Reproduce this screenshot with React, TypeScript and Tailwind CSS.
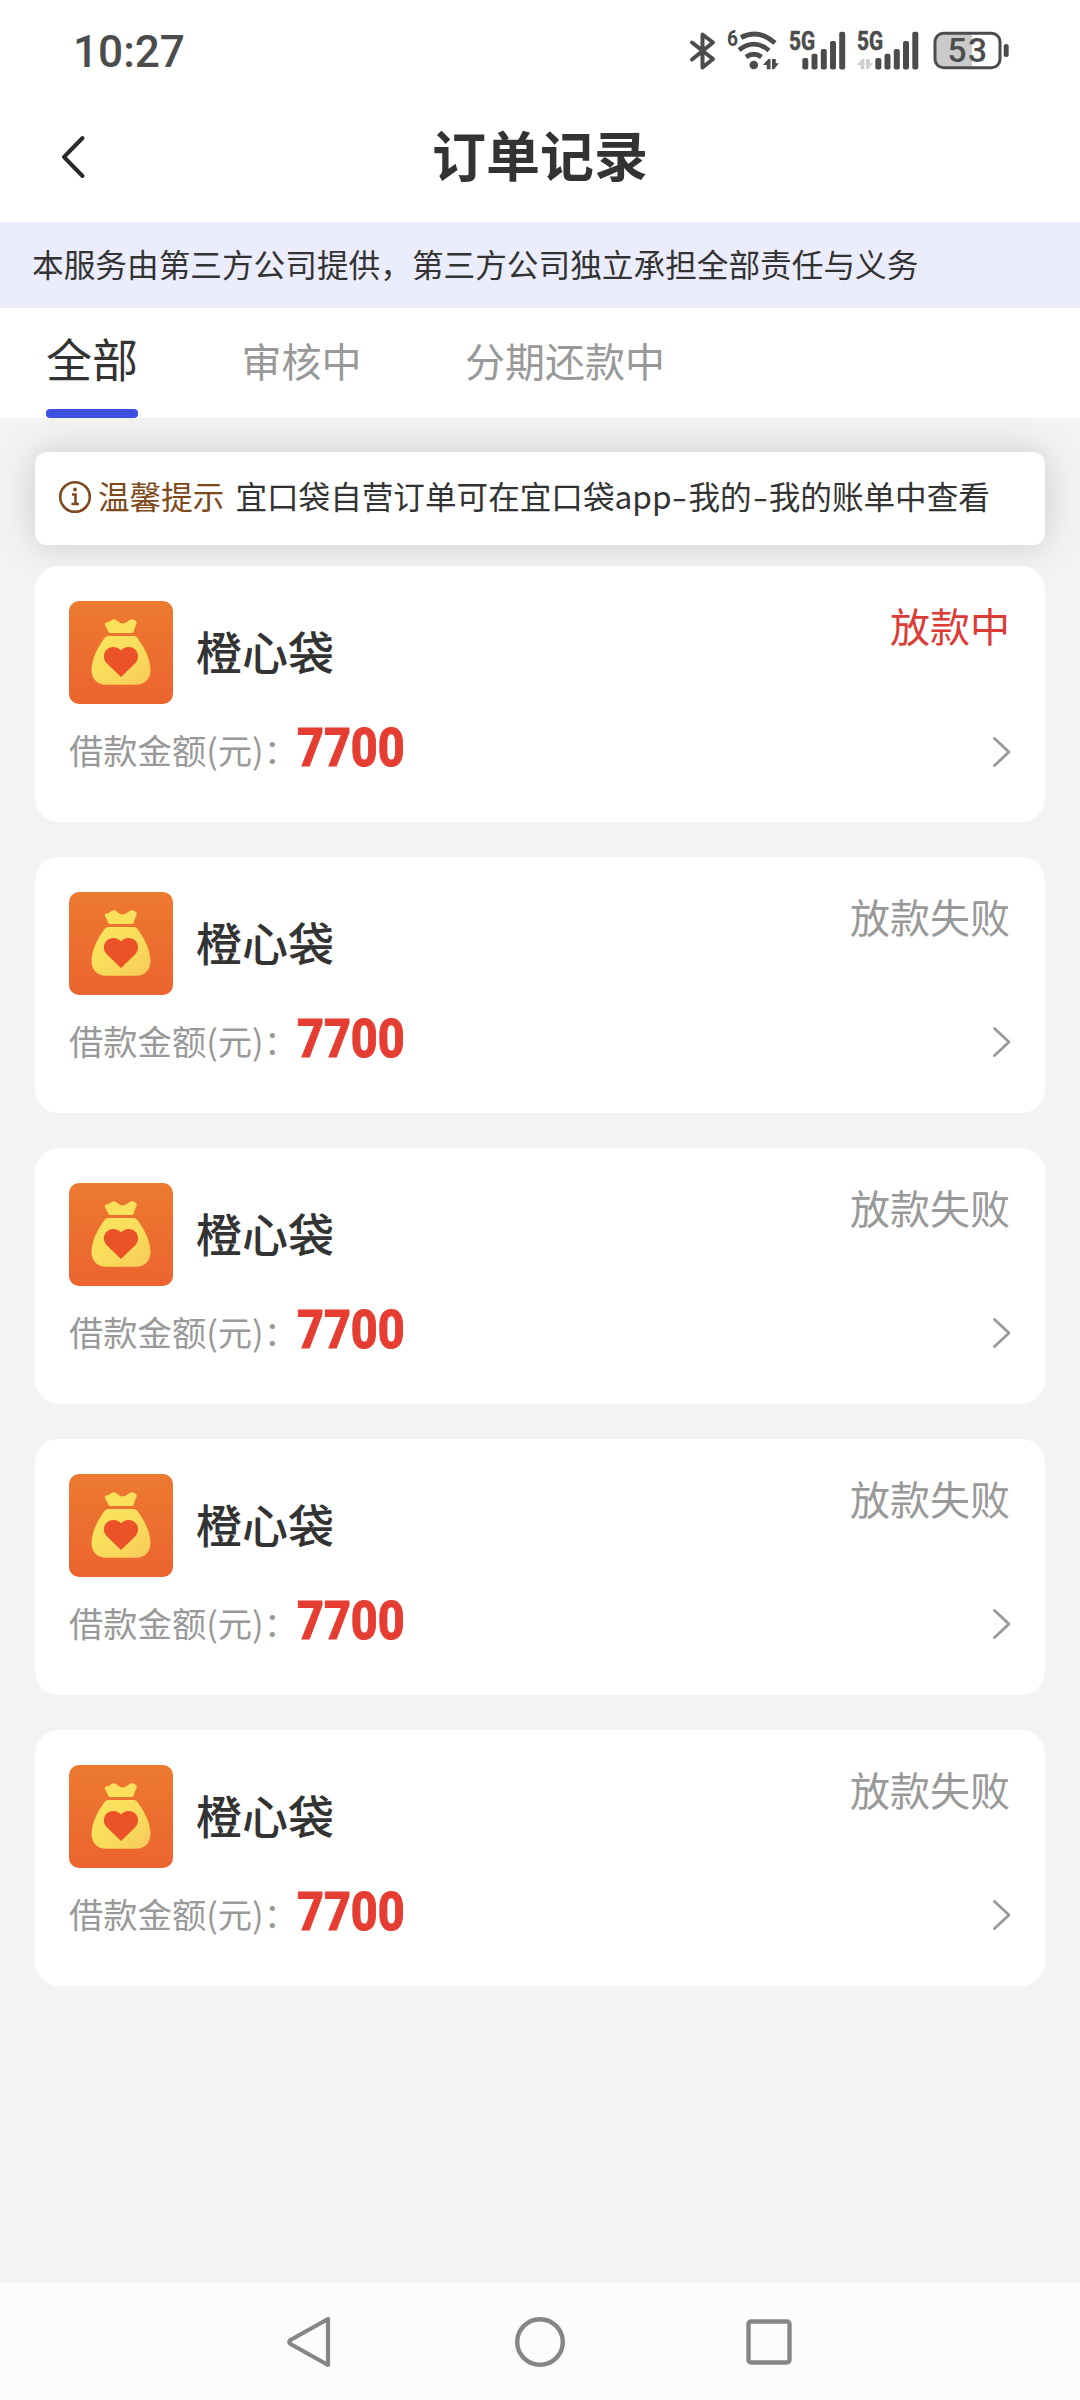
const orders = [
  { status: '放款中', active: true },
  { status: '放款失败', active: false },
  { status: '放款失败', active: false },
  { status: '放款失败', active: false },
  { status: '放款失败', active: false },
];

function StatusIcons() {
  return (
    <svg className="block" width="380" height="80" viewBox="0 0 380 80" fill="none" stroke="#4c4c4c">
      {/* bluetooth */}
      <path d="M32 32.5 L53 49 L42.5 57.5 V24.5 L53 32.5 L32 49.5" strokeWidth="4" strokeLinejoin="round" strokeLinecap="round" />
      {/* wifi */}
      <g strokeWidth="4.8">
        <path d="M81 27.5 Q99 18.5 115 33" />
        <path d="M79 40 Q94.5 28 109 40.5" />
        <path d="M86 47 Q94 41.5 101.500 47" />
      </g>
      <circle cx="93.800" cy="55" r="4.300" fill="#4c4c4c" stroke="none" />
      <path d="M103 55 L108.300 49 H110.500 V59.300 H106.800 V55 Z M112 49 V59.300 H114 L119 53.300 H115.800 V49 Z" fill="#4c4c4c" stroke="none" />
      <path d="M197 55 L202.300 49 H204.500 V59.300 H200.800 V55 Z M206 49 V59.300 H208 L213 53.300 H209.800 V49 Z" fill="#cfcfcf" stroke="none" />
      {/* signal bars */}
      <g fill="#4c4c4c" stroke="none">
        <rect x="142.300" y="48" width="6" height="11.500" rx="2" />
        <rect x="151.500" y="43.700" width="6" height="15.800" rx="2" />
        <rect x="160.800" y="39" width="6" height="20.500" rx="2" />
        <rect x="170" y="31" width="6" height="28.500" rx="2" />
        <rect x="179.200" y="21.700" width="6" height="37.800" rx="2" />
        <rect x="215.300" y="48" width="6" height="11.500" rx="2" />
        <rect x="224.500" y="43.700" width="6" height="15.800" rx="2" />
        <rect x="233.800" y="39" width="6" height="20.500" rx="2" />
        <rect x="243" y="31" width="6" height="28.500" rx="2" />
        <rect x="252.300" y="21.700" width="6" height="37.800" rx="2" />
      </g>
      {/* battery */}
      <path d="M283 23.300 H312 V57.700 H283 Q275 57.700 275 49.700 V31.300 Q275 23.300 283 23.300Z" fill="#cacaca" stroke="none" />
      <rect x="275" y="23.300" width="65" height="34.400" rx="8.500" strokeWidth="3" />
      <rect x="343.700" y="34" width="5" height="13" rx="2.500" fill="#4c4c4c" stroke="none" />
      <g fill="#4c4c4c" stroke="none" fontFamily="Roboto, sans-serif">
        <text x="67" y="36" fontSize="22" fontWeight="700" textLength="11" lengthAdjust="spacingAndGlyphs">6</text>
        <text x="129" y="40" fontSize="25" fontWeight="700" textLength="26" lengthAdjust="spacingAndGlyphs" stroke="#4c4c4c" strokeWidth="0.6">5G</text>
        <text x="197" y="40" fontSize="25" fontWeight="700" textLength="26" lengthAdjust="spacingAndGlyphs" stroke="#4c4c4c" strokeWidth="0.6">5G</text>
        <text x="287.500" y="52" fontSize="33.500" fontWeight="500" textLength="39.500" lengthAdjust="spacing">53</text>
      </g>
    </svg>
  );
}

function BagLogo() {
  return (
    <svg className="block h-[103px] w-[104px] rounded-[10px]" viewBox="0 0 104 103">
      <defs>
        <linearGradient id="bg" x1="0" y1="0" x2="0" y2="1">
          <stop offset="0" stopColor="#ec7a2f" />
          <stop offset="1" stopColor="#ec642f" />
        </linearGradient>
        <linearGradient id="bag" x1="0" y1="0" x2="1" y2="1">
          <stop offset="0" stopColor="#fbe55e" />
          <stop offset="0.6" stopColor="#f8da5a" />
          <stop offset="1" stopColor="#f8c85c" />
        </linearGradient>
      </defs>
      <rect width="104" height="103" fill="url(#bg)" />
      <path d="M39.500 31 L36 24 Q35 22 37.500 21.500 Q40.500 21.300 42.500 19.100 Q45.500 17 49 20.500 Q52.500 23.300 56 22 Q59 20 61.500 18.500 Q64.500 17.300 67 20 Q68.500 22 66.500 25 L64.500 31 Q64 32 62.500 32 H41.500 Q40 32 39.500 31Z" fill="#fbe05c" />
      <path d="M39.500 35 H64.500 Q67 35 68.500 37 C76 47.500 81 57.500 81.500 68.500 C81.500 78.500 75.500 83.700 67 83.700 H37 C28.500 83.700 22.500 78.500 22.500 68.500 C23 57.500 28 47.500 35.500 37 Q37 35 39.500 35Z" fill="url(#bag)" />
      <path d="M52 76 L37.500 62 C33 57 34.500 49.500 40.500 46.800 C45 45 49.500 46.500 52 49.500 C54.500 46.500 59 45 63.500 46.800 C69.500 49.500 71 57 66.500 62 Z" fill="#ec5228" />
    </svg>
  );
}

function OrderCard({ status, active }: { status: string; active: boolean }) {
  return (
    <div className="flex h-[256px] flex-col rounded-[24px] bg-white pt-[35px] pr-[34px] pl-[34px]">
      <div className="flex h-[103px]">
        <BagLogo />
        <div className="ml-[23px] flex-1 text-[46px] leading-[98px] font-medium text-[#333]">橙心袋</div>
        <div className={active ? 'mt-[4px] mr-px text-[40px] leading-[41px] text-[#dc3c36]' : 'mt-[4px] mr-px text-[40px] leading-[41px] text-[#999]'}>{status}</div>
      </div>
      <div className="mt-[15px] flex h-[60px] items-center">
        <div className="w-[228px] text-[34.300px] leading-[60px] whitespace-nowrap text-[#999]">借款金额(元)：</div>
        <div className="flex-1">
          <div className="-mt-[2px] w-[130px] origin-left scale-x-[0.865] font-[Roboto,sans-serif] text-[54px] leading-[54px] font-extrabold text-[#e63d33] [-webkit-text-stroke:1px_#e63d33]">7700</div>
        </div>
        <svg className="mt-[5px] block" width="19" height="32" viewBox="0 0 19 32" fill="none" stroke="#999" strokeWidth="2.800" strokeLinecap="round" strokeLinejoin="round">
          <path d="M2.500 2.500 L17 16 L2.500 29.500" />
        </svg>
      </div>
    </div>
  );
}

function Dash() {
  return <span className="inline-block w-[17px] scale-x-[1.400] text-center">-</span>;
}

export default function App() {
  return (
    <div className="flex h-[2400px] w-[1080px] flex-col overflow-hidden bg-[#f3f3f3] font-['Noto_Sans_CJK_SC',sans-serif]">
      <div className="flex h-[100px] justify-between bg-white pt-[10px] pr-[40px] pl-[73px]">
        <div className="mt-[16px] origin-left scale-x-[0.98] font-[Roboto,sans-serif] text-[45px] leading-[52px] font-medium text-[#4c4c4c]">10:27</div>
        <StatusIcons />
      </div>

      <header className="flex h-[122px] items-center bg-white pb-[8px]">
        <svg className="ml-[58px] block" width="30" height="48" viewBox="0 0 30 48" fill="none" stroke="#2b2b2b" strokeWidth="4" strokeLinecap="round" strokeLinejoin="round">
          <path d="M24.500 5 L6 24 L24.500 43" />
        </svg>
        <h1 className="flex-1 pr-[88px] pb-[6px] text-center text-[54px] leading-[60px] font-bold text-[#333]">订单记录</h1>
      </header>

      <div className="h-[86px] bg-[#ebedfc] pl-[32px] text-[31.660px] leading-[83px] whitespace-nowrap text-[#333]">
        本服务由第三方公司提供，第三方公司独立承担全部责任与义务
      </div>

      <nav className="flex h-[110px] gap-[103.500px] bg-white pl-[46px] text-[40px] leading-[104px] text-[#999]">
        <div className="flex flex-col">
          <div className="h-[101px] text-[46px] leading-[99px] text-[#333]">全部</div>
          <div className="h-[9px] w-[92px] rounded-[4px] bg-[#3b50e0]" />
        </div>
        <div>审核中</div>
        <div>分期还款中</div>
      </nav>

      <main className="flex flex-1 flex-col px-[35px] pt-[34px]">
        <div className="flex h-[93px] shrink-0 items-center rounded-[12px] bg-white pb-[6px] pl-[23px] text-[31.600px] whitespace-nowrap text-[#333] shadow-[0_0_36px_rgba(0,0,0,0.17)]">
          <svg className="mt-[2px] block" width="34" height="34" viewBox="0 0 34 34" fill="none" stroke="#7e4a22" strokeWidth="2.600">
            <circle cx="17" cy="17" r="14.800" />
            <circle cx="17" cy="9.500" r="1.900" fill="#7e4a22" stroke="none" />
            <path d="M14 14.500 H17.500 V24 M13.500 24 H21" />
          </svg>
          <span className="ml-[6px] text-[#7e4a1c]">温馨提示</span>
          <span className="ml-[11px]">
            宜口袋自营订单可在宜口袋app<Dash />我的<Dash />我的账单中查看
          </span>
        </div>
        <div className="relative mt-[21px] flex flex-col gap-[34.900px]">
          {orders.map((o, i) => (
            <OrderCard key={i} status={o.status} active={o.active} />
          ))}
        </div>
      </main>

      <footer className="h-[117px] bg-[#fcfcfc]">
        <div className="flex h-[117px] items-center justify-between pr-[288px] pl-[286px]">
          <svg className="block" width="46" height="54" viewBox="0 0 46 54" fill="none" stroke="#868686" strokeWidth="4.200" strokeLinejoin="round">
            <path d="M42 4 V50 L4.500 29 Q2 27 4.500 25 Z" />
          </svg>
          <svg className="ml-px block" width="50" height="50" viewBox="0 0 50 50" fill="none" stroke="#868686" strokeWidth="4.400">
            <circle cx="25" cy="25" r="22.800" />
          </svg>
          <svg className="block" width="46" height="46" viewBox="0 0 46 46" fill="none" stroke="#868686" strokeWidth="4.400">
            <rect x="2.500" y="2.500" width="41" height="41" rx="2.500" />
          </svg>
        </div>
      </footer>
    </div>
  );
}
